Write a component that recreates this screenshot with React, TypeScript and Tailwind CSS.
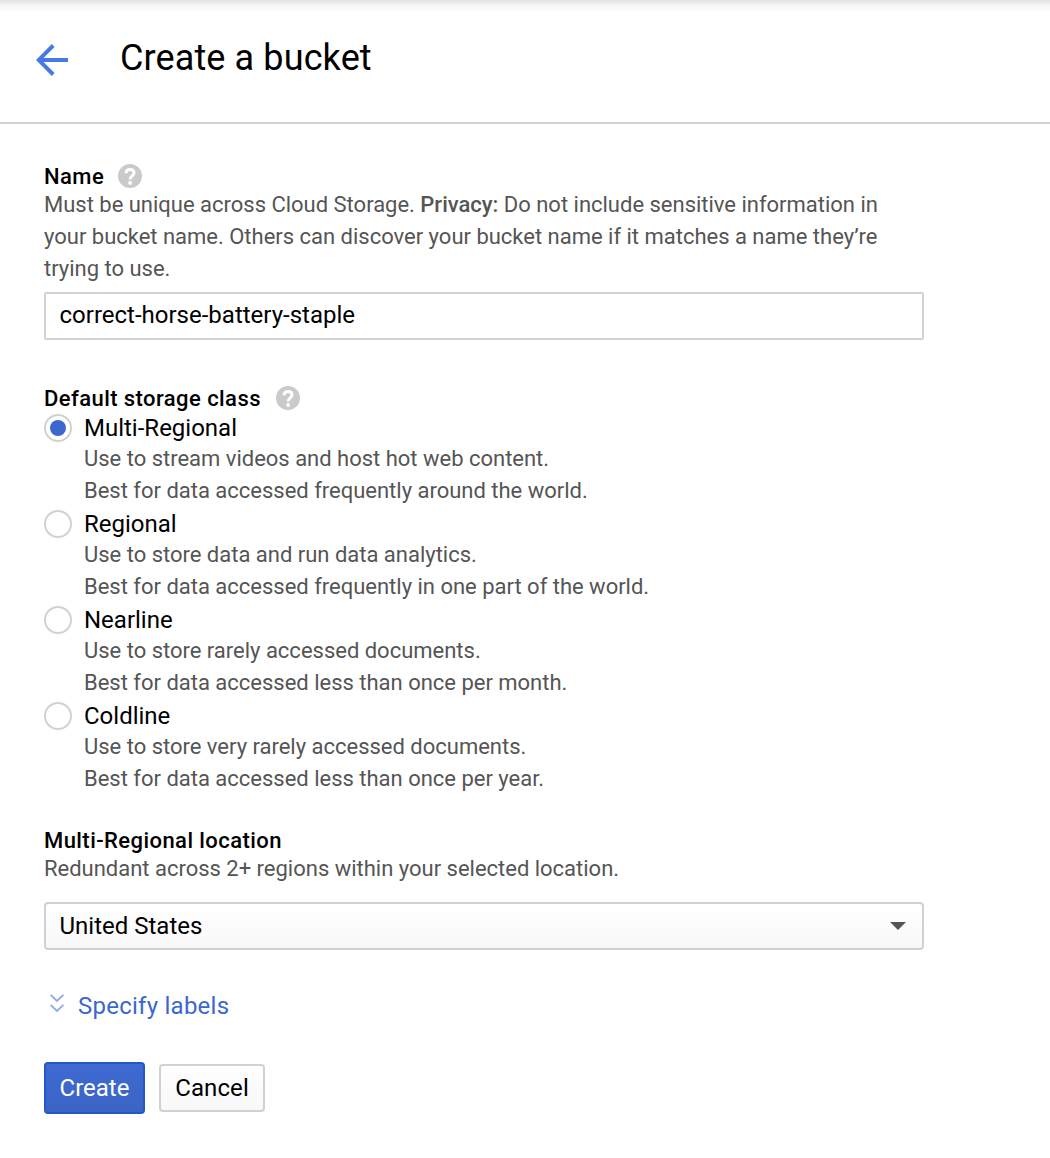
import React from 'react';

const options = [
  { name: 'Multi-Regional', a: 'Use to stream videos and host hot web content.', b: 'Best for data accessed frequently around the world.', on: true },
  { name: 'Regional', a: 'Use to store data and run data analytics.', b: 'Best for data accessed frequently in one part of the world.', on: false },
  { name: 'Nearline', a: 'Use to store rarely accessed documents.', b: 'Best for data accessed less than once per month.', on: false },
  { name: 'Coldline', a: 'Use to store very rarely accessed documents.', b: 'Best for data accessed less than once per year.', on: false },
];

function Help() {
  return (
    <svg className="-mt-0.5 h-6 w-6" viewBox="0 0 24 24" fill="none">
      <circle cx="12" cy="12" r="12" fill="#cacaca" />
      <path d="M8 9.200C8 6.700 9.600 5.400 12 5.400s4 1.400 4 3.500c0 2.900-3.900 3.200-3.900 6.600" stroke="#fff" strokeWidth="3" />
      <circle cx="12.100" cy="19" r="1.900" fill="#fff" />
    </svg>
  );
}

export default function App() {
  return (
    <div className="h-[1158px] w-[1050px] overflow-hidden bg-white font-[Roboto,sans-serif] text-[22px] leading-8 text-[#555]">
      <header className="flex h-[124px] border-b-2 border-[#d1d1d1] bg-[linear-gradient(#e2e2e2,#f5f5f5_5px,#fff_12px)] pl-9">
        <svg className="mt-[43px] h-[34px] w-[33px]" viewBox="0 0 33 34" fill="none" stroke="#4679e2" strokeWidth="3.9">
          <path d="M32 17H3M17.200 2.500L2.700 17l14.500 14.500" />
        </svg>
        <h1 className="ml-[51px] mt-[37px] text-[36px] leading-[42px] tracking-[0.12px] text-black">Create a bucket</h1>
      </header>
      <main className="ml-11 w-[880px] pt-[37px]">
        <section className="h-[222px]">
          <div className="flex h-8 items-center gap-3.5 font-medium tracking-[0.43px] text-black">Name<Help /></div>
          <p className="-mt-1 h-24 whitespace-nowrap tracking-[-0.01px]">
            Must be unique across Cloud Storage. <span className="font-medium">Privacy:</span> Do not include sensitive information in<br />
            your bucket name. Others can discover your bucket name if it matches a name they’re<br />trying to use.
          </p>
          <div className="mt-[7px] flex h-12 items-center rounded-[2px] border-2 border-[#d1d1d1] px-[13.5px] pb-0.5 text-2xl text-black">correct-horse-battery-staple</div>
        </section>
        <section className="h-[442px]">
          <div className="flex h-8 items-center gap-[15px] font-medium tracking-[0.43px] text-black">Default storage class<Help /></div>
          {options.map((o) => (
            <div key={o.name} className="-mt-px mb-px flex h-24 gap-3">
              <span className="flex h-7 w-7 items-center justify-center rounded-full border-2 border-[#d1d1d1]">
                {o.on && <span className="h-4 w-4 rounded-full bg-[#3b67cf]" />}
              </span>
              <div>
                <div className="h-[29px] text-2xl leading-7 text-black">{o.name}</div>
                <p className="whitespace-nowrap tracking-[-0.01px]">{o.a}<br />{o.b}</p>
              </div>
            </div>
          ))}
        </section>
        <section>
          <div className="h-8 font-medium tracking-[0.43px] text-black">Multi-Regional location</div>
          <p className="-mt-1 tracking-[-0.01px]">Redundant across 2+ regions within your selected location.</p>
          <div className="mt-[17px] flex h-12 items-center justify-between rounded-[4px] border-2 border-[#d1d1d1] bg-linear-to-b from-white to-[#f8f8f8] pl-[13.5px] pr-4 text-2xl text-black">
            United States
            <svg className="h-2 w-4" viewBox="0 0 16 8" fill="#555"><path d="M0 0h16L8 8z" /></svg>
          </div>
        </section>
        <div className="mt-10 flex h-8 items-center gap-3 pl-1.5 text-2xl tracking-[0.25px] text-[#3b67cf]">
          <svg className="-mt-1.5 h-[18px] w-4" viewBox="0 0 16 18" fill="none" stroke="#91aae5" strokeWidth="1.8"><path d="M.6 .8l6.400 6.200 6.400-6.200M.6 10.800l6.400 6.200 6.400-6.200" /></svg>
          Specify labels
        </div>
        <div className="mt-10 flex items-center gap-3.5 text-2xl text-black">
          <button className="h-[52px] w-[101px] rounded-[4px] border-2 border-[#2459c5] bg-linear-to-b from-[#3d6ad3] to-[#3b64c4] text-white">Create</button>
          <button className="h-12 w-[106px] rounded-[4px] border-2 border-[#d1d1d1] bg-linear-to-b from-white to-[#f8f8f8] px-0 tracking-[0.1px]">Cancel</button>
        </div>
      </main>
    </div>
  );
}
